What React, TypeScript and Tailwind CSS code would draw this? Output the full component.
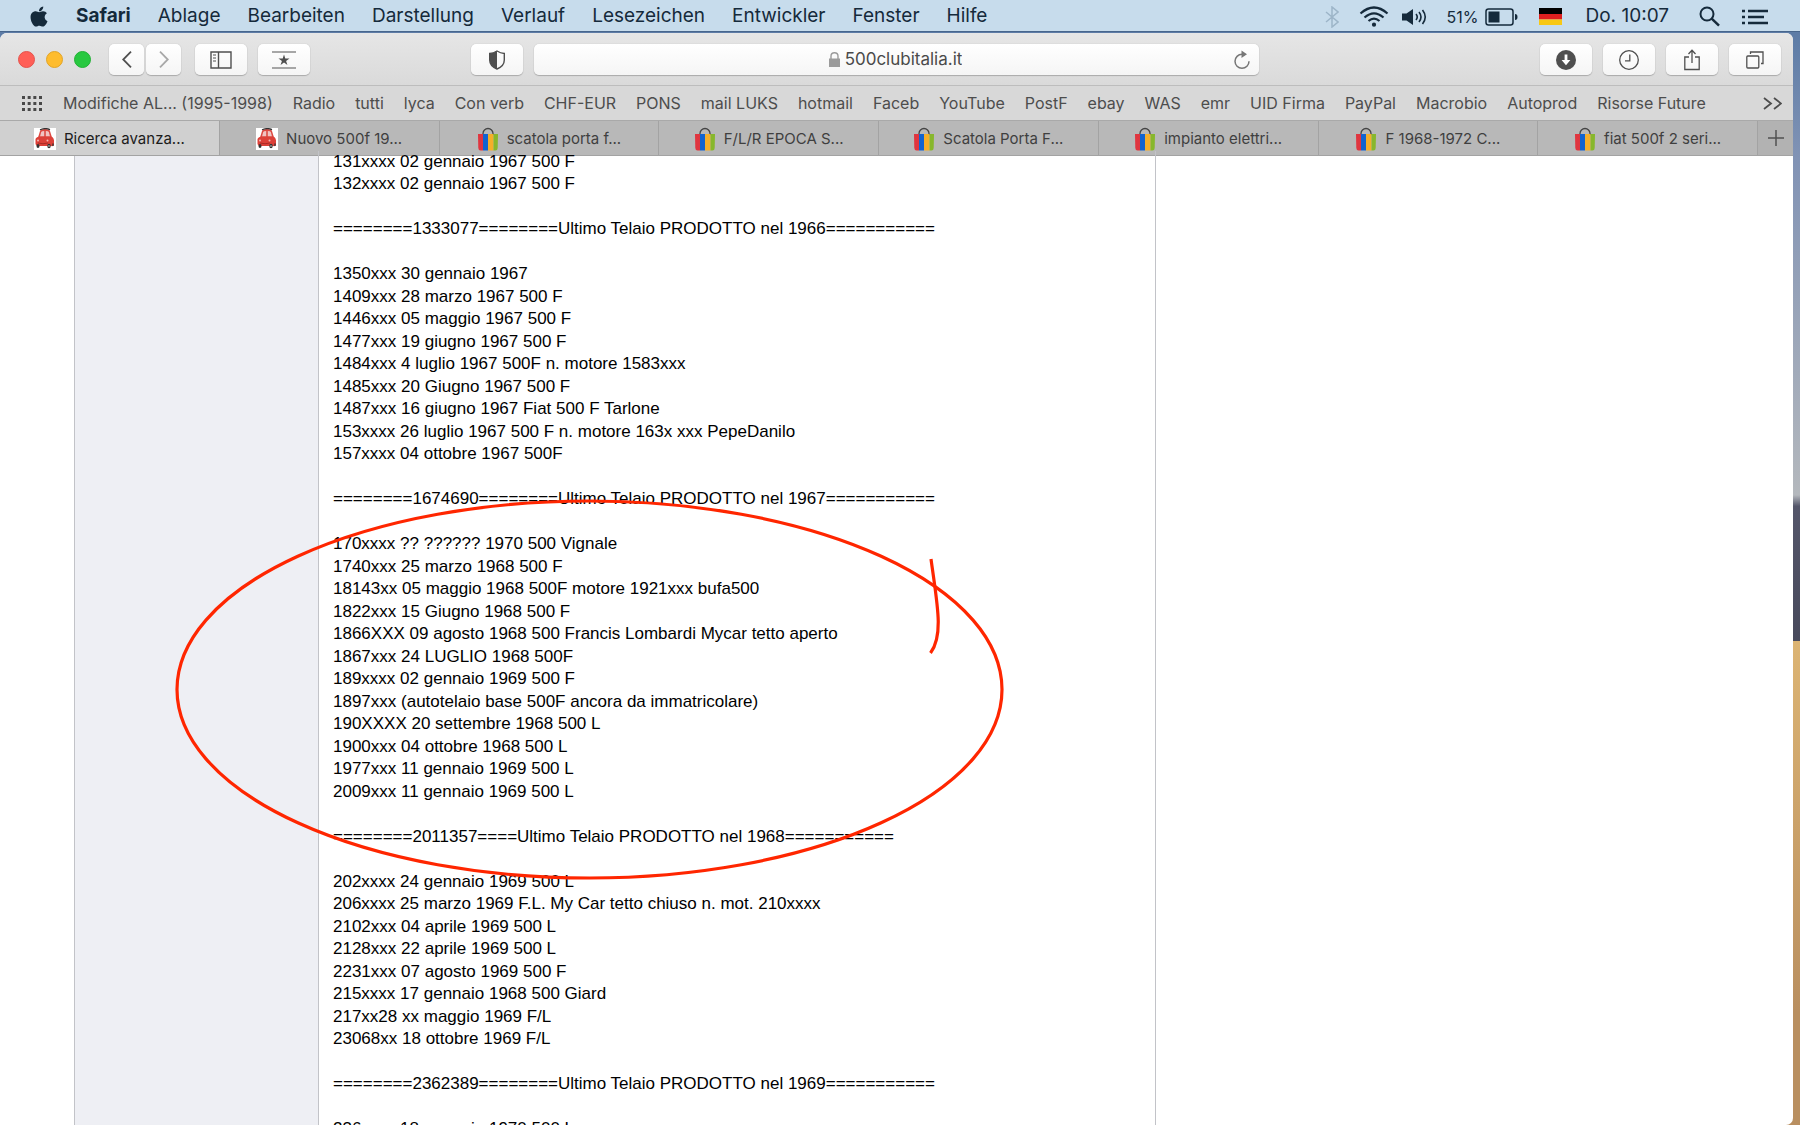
import { FC, ReactNode } from 'react'
import { FaApple } from 'react-icons/fa'

const menus = ['Ablage', 'Bearbeiten', 'Darstellung', 'Verlauf', 'Lesezeichen', 'Entwickler', 'Fenster', 'Hilfe']

const bookmarks = [
  'Modifiche AL... (1995-1998)',
  'Radio',
  'tutti',
  'lyca',
  'Con verb',
  'CHF-EUR',
  'PONS',
  'mail LUKS',
  'hotmail',
  'Faceb',
  'YouTube',
  'PostF',
  'ebay',
  'WAS',
  'emr',
  'UID Firma',
  'PayPal',
  'Macrobio',
  'Autoprod',
  'Risorse Future',
]

const tabs = [
  { title: 'Ricerca avanza...', icon: 'car' },
  { title: 'Nuovo 500f 19...', icon: 'car' },
  { title: 'scatola porta f...', icon: 'bag' },
  { title: 'F/L/R EPOCA S...', icon: 'bag' },
  { title: 'Scatola Porta F...', icon: 'bag' },
  { title: 'impianto elettri...', icon: 'bag' },
  { title: 'F 1968-1972 C...', icon: 'bag' },
  { title: 'fiat 500f 2 seri...', icon: 'bag' },
]

const lines = [
  '131xxxx 02 gennaio 1967 500 F',
  '132xxxx 02 gennaio 1967 500 F',
  '',
  '========1333077========Ultimo Telaio PRODOTTO nel 1966===========',
  '',
  '1350xxx 30 gennaio 1967',
  '1409xxx 28 marzo 1967 500 F',
  '1446xxx 05 maggio 1967 500 F',
  '1477xxx 19 giugno 1967 500 F',
  '1484xxx 4 luglio 1967 500F n. motore 1583xxx',
  '1485xxx 20 Giugno 1967 500 F',
  '1487xxx 16 giugno 1967 Fiat 500 F Tarlone',
  '153xxxx 26 luglio 1967 500 F n. motore 163x xxx PepeDanilo',
  '157xxxx 04 ottobre 1967 500F',
  '',
  '========1674690========Ultimo Telaio PRODOTTO nel 1967===========',
  '',
  '170xxxx ?? ?????? 1970 500 Vignale',
  '1740xxx 25 marzo 1968 500 F',
  '18143xx 05 maggio 1968 500F motore 1921xxx bufa500',
  '1822xxx 15 Giugno 1968 500 F',
  '1866XXX 09 agosto 1968 500 Francis Lombardi Mycar tetto aperto',
  '1867xxx 24 LUGLIO 1968 500F',
  '189xxxx 02 gennaio 1969 500 F',
  '1897xxx (autotelaio base 500F ancora da immatricolare)',
  '190XXXX 20 settembre 1968 500 L',
  '1900xxx 04 ottobre 1968 500 L',
  '1977xxx 11 gennaio 1969 500 L',
  '2009xxx 11 gennaio 1969 500 L',
  '',
  '========2011357====Ultimo Telaio PRODOTTO nel 1968===========',
  '',
  '202xxxx 24 gennaio 1969 500 L',
  '206xxxx 25 marzo 1969 F.L. My Car tetto chiuso n. mot. 210xxxx',
  '2102xxx 04 aprile 1969 500 L',
  '2128xxx 22 aprile 1969 500 L',
  '2231xxx 07 agosto 1969 500 F',
  '215xxxx 17 gennaio 1968 500 Giard',
  '217xx28 xx maggio 1969 F/L',
  '23068xx 18 ottobre 1969 F/L',
  '',
  '========2362389========Ultimo Telaio PRODOTTO nel 1969===========',
  '',
  '236xxxx 18 gennaio 1970 500 L',
]

const CarIcon = () => (
  <svg viewBox="0 0 22 22" className="h-[22px] w-[22px] shrink-0">
    <rect width="22" height="22" fill="#fff" />
    <path d="M4 9.500 6 3Q6.500 1 11 1t5 2l2 6.500Z" fill="#dd4a42" />
    <path d="M6 1.800Q11-.6 16 1.600" fill="none" stroke="#333" strokeWidth="1.200" />
    <path d="m6 8.500 1.200-4.500Q7.500 3 10.200 3v5.500ZM11.800 8.500V3q2.600 0 3 1L16 8.500Z" fill="#f0c4c2" />
    <path d="M1.500 11Q2.500 8.500 6 8.500h11q2.600.4 3 4v4.500Q19.500 18.500 17 18H5Q2 18.500 1.500 16Z" fill="#dc4038" />
    <path d="M4 15q5 1.500 10 0" fill="none" stroke="#9c2521" strokeWidth=".8" />
    <circle cx="4" cy="12.500" r="1" fill="#f3b8b5" />
    <circle cx="13.500" cy="12.500" r="1" fill="#f3b8b5" />
    <ellipse cx="4" cy="18" rx="1.500" ry="1.900" fill="#333" />
    <ellipse cx="15" cy="18" rx="1.700" ry="2.200" fill="#333" />
    <ellipse cx="15" cy="18" rx=".7" ry="1" fill="#bbb" />
    <path d="M19 15.500v2.500" stroke="#333" strokeWidth="1.300" />
  </svg>
)

const BagIcon = () => (
  <svg viewBox="0 0 22 24" className="h-6 w-[22px] shrink-0">
    <path d="M6 8V6.500a5 5 0 0 1 10 0V8" fill="none" stroke="#444" strokeWidth="1.300" />
    <path d="M1 7h5v16.500H3.500Q1.500 23.500 1.300 21Z" fill="#e0353f" />
    <path d="M6 7h5v16.500H6Z" fill="#1263d0" />
    <path d="M11 7h5.500v16.500H11Z" fill="#f5ae2a" />
    <path d="M16.500 7H21l-.3 14q-.2 2.500-2.200 2.500h-2Z" fill="#87b72c" />
  </svg>
)

interface ToolButtonProps {
  label: string
  narrow?: boolean
  children: ReactNode
}

const ToolButton: FC<ToolButtonProps> = ({ label, narrow, children }) => {
  return (
    <button
      aria-label={label}
      className={`${narrow ? 'w-[35px]' : 'w-[52px]'} flex h-[31px] shrink-0 items-center justify-center rounded-[5px] bg-gradient-to-b from-white to-[#f5f5f5] text-[#4f4f4f] shadow-[0_1px_1px_#aaa,0_0_1px_#aaa]`}
    >
      {children}
    </button>
  )
}

const MenuBar = () => (
  <header className="flex h-8 shrink-0 items-center border-b border-[#48668c] bg-[#c7dcec] pt-[2px] pr-8 pl-[29px] text-[19px] text-[#152a3b]">
    <FaApple className="mr-[27px] h-[23px] w-[20px] shrink-0" />
    <nav className="flex gap-[27px]">
      <button className="font-bold">Safari</button>
      {menus.map((m) => (
        <button key={m}>{m}</button>
      ))}
    </nav>
    <div className="ml-auto flex items-center">
      <svg viewBox="0 0 14 22" className="mr-5 h-[22px] w-[14px]" fill="none" stroke="#9db5c8" strokeWidth="1.500">
        <path d="m1 6 12 10-6 5V1l6 5L1 16" />
      </svg>
      <svg viewBox="0 0 30 22" className="mr-3 h-[22px] w-[30px]" fill="none" stroke="currentColor" strokeWidth="2.200">
        <path d="M1.500 7.500q13.500-12 27 0" />
        <path d="M5.500 11.500q9.500-8.400 19 0" />
        <path d="M9.500 15q5.500-4.600 11 0" />
        <circle cx="15" cy="18.700" r="1" fill="currentColor" />
      </svg>
      <svg viewBox="0 0 26 20" className="mr-5 h-5 w-[26px]" fill="none" stroke="currentColor" strokeWidth="1.600">
        <path d="M1 6.500h4.500L12 2v16l-6.500-4.500H1Z" fill="currentColor" stroke="none" />
        <path d="M15 7q2.500 3 0 6M18 5q4 5 0 10M21.500 3q5.500 7 0 14" />
      </svg>
      <span className="mr-[6px] text-base">51%</span>
      <svg viewBox="0 0 33 18" className="mr-[21px] h-[18px] w-[33px]">
        <rect x="1" y="1" width="27" height="16" rx="2.500" fill="none" stroke="currentColor" strokeWidth="1.500" />
        <rect x="3.500" y="3.500" width="11" height="11" fill="currentColor" />
        <path d="M30 6q2.500 0 2.500 3T30 12Z" fill="currentColor" />
      </svg>
      <svg viewBox="0 0 23 17" className="mr-6 h-[17px] w-[23px]">
        <path d="M0 0h23v6H0Z" fill="#000" />
        <path d="M0 6h23v5.500H0Z" fill="#dd1f1f" />
        <path d="M0 11.500h23V17H0Z" fill="#f7c815" />
      </svg>
      <span className="mr-[30px]">Do. 10:07</span>
      <svg viewBox="0 0 21 21" className="mr-[22px] h-[21px] w-[21px]" fill="none" stroke="currentColor" strokeWidth="2">
        <circle cx="8" cy="8" r="6.500" />
        <path d="m12.700 12.700 7.300 7" strokeWidth="2.500" />
      </svg>
      <svg viewBox="0 0 26 16" className="h-4 w-[26px]" stroke="currentColor" strokeWidth="2.600">
        <path d="M0 2h3M0 8h3M0 14h3M6 2h20M6 8h16M6 14h20" />
      </svg>
    </div>
  </header>
)

const Toolbar = () => (
  <div className="flex h-[53px] shrink-0 items-center border-b border-[#bdbdbd] bg-gradient-to-b from-[#e6e6e6] to-[#dadada] pr-3 pt-px pl-[18px]">
    <div className="mr-[18px] flex gap-[11px]">
      <button aria-label="Schließen" className="h-[17px] w-[17px] rounded-full border border-[#e4544d] bg-[#ff5f57]" />
      <button aria-label="Minimieren" className="h-[17px] w-[17px] rounded-full border border-[#e2a427] bg-[#febc2e]" />
      <button aria-label="Zoomen" className="h-[17px] w-[17px] rounded-full border border-[#22b135] bg-[#28c840]" />
    </div>
    <div className="mr-[14px] flex gap-[2px]">
      <ToolButton label="Zurück" narrow>
        <svg viewBox="0 0 10 17" className="h-[17px] w-[10px]" fill="none" stroke="currentColor" strokeWidth="1.800">
          <path d="M9 .7 1.200 8.500 9 16.300" />
        </svg>
      </ToolButton>
      <ToolButton label="Vorwärts" narrow>
        <svg viewBox="0 0 10 17" className="h-[17px] w-[10px]" fill="none" stroke="#a8a8a8" strokeWidth="1.800">
          <path d="m1 .7 7.800 7.800L1 16.300" />
        </svg>
      </ToolButton>
    </div>
    <div className="flex gap-[11px]">
      <ToolButton label="Seitenleiste">
        <svg viewBox="0 0 22 18" className="h-[18px] w-[22px]" fill="none" stroke="currentColor" strokeWidth="1.400">
          <path d="M1 1h20v16H1ZM8.500 1v16" />
          <path d="M3 4h3M3 7h3M3 10h3" strokeWidth="1" />
        </svg>
      </ToolButton>
      <ToolButton label="Favoriten">
        <svg viewBox="0 0 24 18" className="h-[18px] w-6">
          <path d="M0 1h24M0 17h24" stroke="#8a8a8a" strokeWidth="1.400" />
          <path d="m12 3.500 1.300 4h4.200l-3.400 2.400 1.300 4-3.400-2.400-3.400 2.400 1.300-4-3.400-2.400h4.200Z" fill="currentColor" />
        </svg>
      </ToolButton>
    </div>
    <div className="mr-[281px] ml-[161px] flex flex-1 gap-[11px]">
      <ToolButton label="Datenschutzbericht">
        <svg viewBox="0 0 18 20" className="h-5 w-[18px]">
          <path d="M9 1q3.500 2.200 7.300 2.500V10q0 6-7.300 9-7.300-3-7.300-9V3.500Q5.500 3.200 9 1Z" fill="none" stroke="currentColor" strokeWidth="1.400" />
          <path d="M9 1v18q-7.300-3-7.300-9V3.500Q5.500 3.200 9 1Z" fill="currentColor" />
        </svg>
      </ToolButton>
      <div className="flex h-[31px] flex-1 items-center rounded-[5px] bg-gradient-to-b from-white to-[#f5f5f5] pr-2 pl-6 text-[#4a4a4a] shadow-[0_1px_1px_#aaa,0_0_1px_#aaa]">
        <div className="flex flex-1 items-center justify-center gap-[5px]">
          <svg viewBox="0 0 11 15" className="h-[15px] w-[11px]">
            <path d="M0 6.500h11V15H0Z" fill="#9b9b9b" />
            <path d="M2 7V4.300q0-3.500 3.500-3.500T9 4.300V7" fill="none" stroke="#9b9b9b" strokeWidth="1.400" />
          </svg>
          <input aria-label="Adresse" defaultValue="500clubitalia.it" className="field-sizing-content bg-transparent text-[17px] outline-none" />
        </div>
        <button aria-label="Neu laden">
          <svg viewBox="0 0 18 20" className="h-5 w-[18px]">
            <path d="M9 4.300a7 7 0 1 0 7 7" fill="none" stroke="#777" strokeWidth="1.500" />
            <path d="M8.500.5 14 4.300 8.500 8Z" fill="#777" />
          </svg>
        </button>
      </div>
    </div>
    <div className="flex gap-[11px]">
      <ToolButton label="Downloads">
        <svg viewBox="0 0 20 20" className="h-5 w-5">
          <circle cx="10" cy="10" r="10" fill="currentColor" />
          <path d="M8.600 4.500h2.800v5.500h3L10 15.200 5.600 10h3Z" fill="#fff" />
        </svg>
      </ToolButton>
      <ToolButton label="Verlauf">
        <svg viewBox="0 0 20 20" className="h-5 w-5" fill="none" stroke="currentColor" strokeWidth="1.300">
          <circle cx="10" cy="10" r="9.300" />
          <path d="M10.800 4.500v6.300H6" />
        </svg>
      </ToolButton>
      <ToolButton label="Teilen">
        <svg viewBox="0 0 16 22" className="h-[22px] w-4" fill="none" stroke="currentColor" strokeWidth="1.300">
          <path d="M5 8H.8v12.500h14.400V8H11M8 14V1.500M4.500 5 8 1.300 11.500 5" />
        </svg>
      </ToolButton>
      <ToolButton label="Tabübersicht">
        <svg viewBox="0 0 18 18" className="h-[18px] w-[18px]" fill="none" stroke="currentColor" strokeWidth="1.300">
          <rect x=".8" y="5" width="12" height="12" rx="1" />
          <path d="M4.500 3V1h12.500v11.500h-2" />
        </svg>
      </ToolButton>
    </div>
  </div>
)

const BookmarksBar = () => (
  <div className="flex h-[35px] shrink-0 items-center border-b border-[#a9a9a9] bg-[#d8d8d8] pr-[11px] pl-[22px] text-[#4d4d4d]">
    <button aria-label="Favoritenübersicht" className="mr-[21px]">
      <svg viewBox="0 0 20 15" className="h-[15px] w-5" stroke="#484848" strokeWidth="3" strokeDasharray="3 2.670">
        <path d="M0 1.500h20M0 7.500h20M0 13.500h20" />
      </svg>
    </button>
    <nav className="mr-[57px] flex flex-1 justify-between text-base whitespace-nowrap">
      {bookmarks.map((b) => (
        <a key={b} href="#">
          {b}
        </a>
      ))}
    </nav>
    <button aria-label="Weitere Lesezeichen">
      <svg viewBox="0 0 19 13" className="h-[13px] w-[19px]" fill="none" stroke="currentColor" strokeWidth="1.800">
        <path d="m1 1 7 5.500L1 12M11 1l7 5.500L11 12" />
      </svg>
    </button>
  </div>
)

const TabBar = () => (
  <div className="flex h-[35px] shrink-0 border-b border-[#a3a3a3] bg-[#b8b8b8] text-[15px]">
    {tabs.map((tab, i) => (
      <button
        key={tab.title}
        className={`flex flex-1 items-center justify-center gap-2 border-r border-[#a3a3a3] pt-[2px] ${i === 0 ? 'bg-[#d0d0d0] text-[#1c1c1c]' : 'text-[#3f3f3f]'}`}
      >
        {tab.icon === 'car' ? <CarIcon /> : <BagIcon />}
        {tab.title}
      </button>
    ))}
    <button aria-label="Neuer Tab" className="flex w-[35px] items-center justify-center bg-[#b2b2b2]">
      <svg viewBox="0 0 16 16" className="h-4 w-4" stroke="#505050" strokeWidth="1.500">
        <path d="M8 0v16M0 8h16" />
      </svg>
    </button>
  </div>
)

const App = () => {
  return (
    <div className="relative flex h-screen flex-col overflow-hidden bg-[linear-gradient(#5d7ca6_3%,#8193b5_14%,#b4b8bd_44%,#54566a_45%,#484a5c_57%,#dcb473_57%,#b98f60_90%)] font-[Inter,sans-serif]">
      <MenuBar />
      <div className="mt-px mr-[7px] flex min-h-0 flex-1 flex-col overflow-hidden rounded-t-[7px] rounded-br-[7px] bg-white">
        <Toolbar />
        <BookmarksBar />
        <TabBar />
        <main className="flex min-h-0 flex-1 pl-[74px] font-['Liberation_Sans',Arial,sans-serif] text-[17px] text-black">
          <aside className="w-[244px] shrink-0 border-l border-[#c2c3c8] bg-[#eeeff4]" />
          <ul className="-mt-[5px] w-[838px] shrink-0 border-x border-[#c2c3c8] pl-[14px] leading-[22px] whitespace-nowrap">
            {lines.map((line, i) => (
              <li key={i} className="h-[22px] even:h-[23px]">
                {line}
              </li>
            ))}
          </ul>
        </main>
      </div>
      {/* hand-drawn red markup over the page */}
      <svg
        viewBox="0 0 830 384"
        className="pointer-events-none absolute top-[498px] left-[175px] h-[384px] w-[830px]"
        fill="none"
        stroke="#ff2600"
        strokeWidth="3.200"
      >
        <ellipse cx="414.500" cy="191.500" rx="412.500" ry="188.500" />
        <path d="M756 61C762 105 769 137 755.500 155" />
      </svg>
    </div>
  )
}

export default App
